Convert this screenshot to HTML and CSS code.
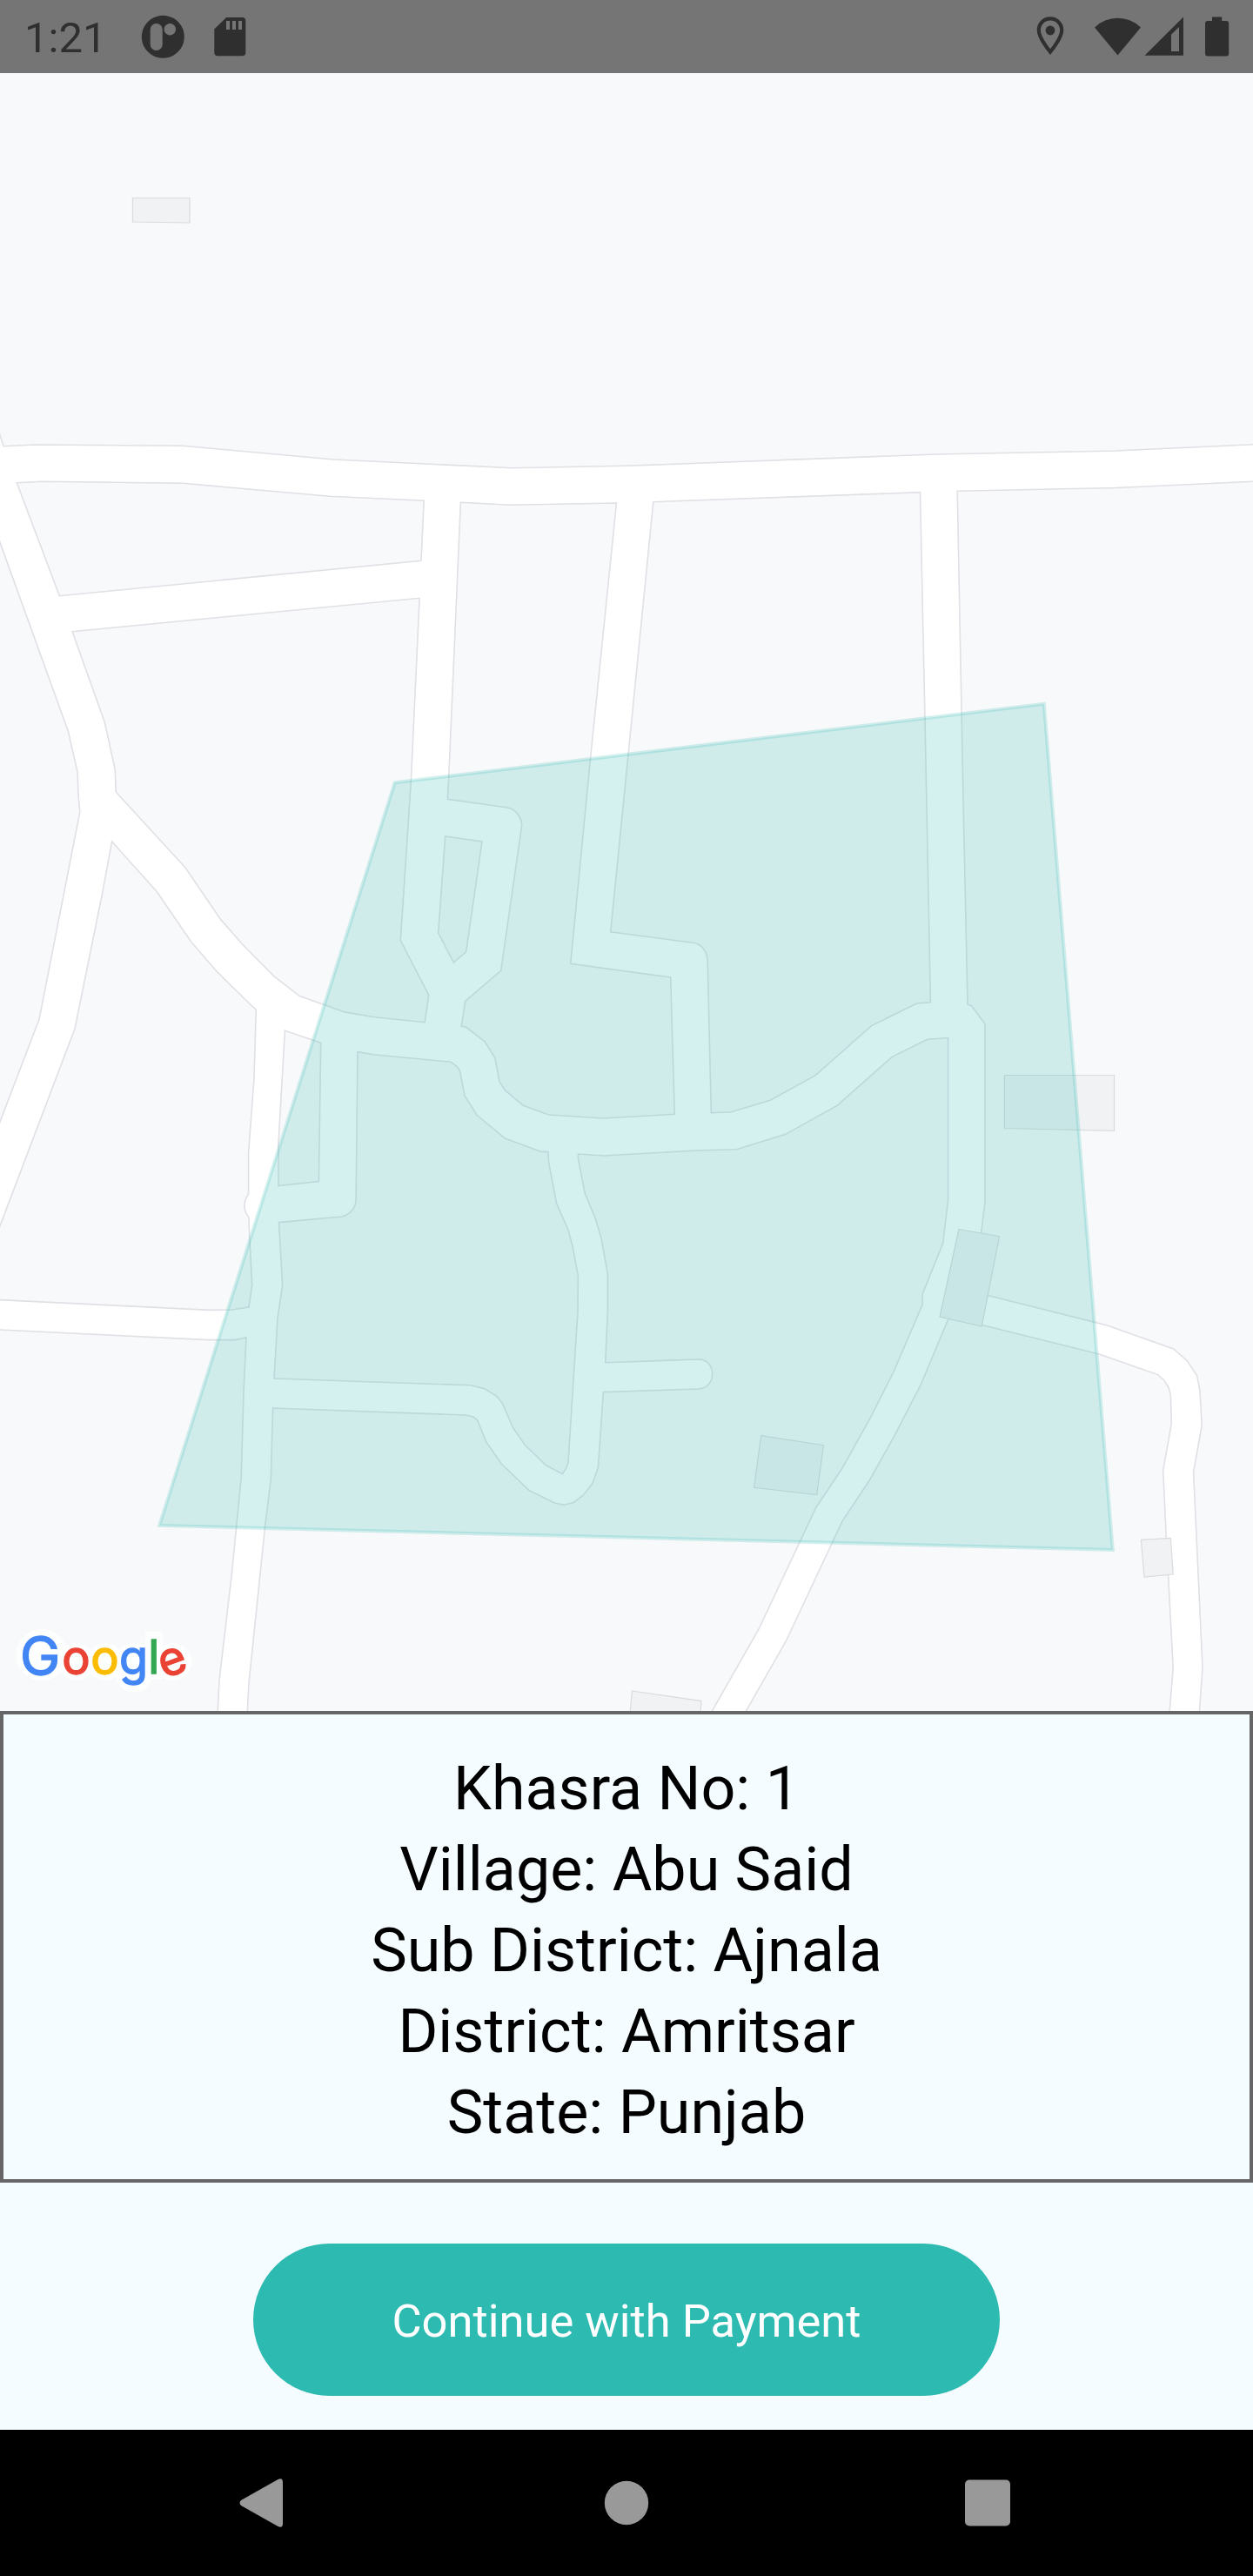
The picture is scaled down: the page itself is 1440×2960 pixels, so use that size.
FILE: index.html
```html
<!DOCTYPE html>
<html lang="en">
<head>
<meta charset="utf-8">
<title>Khasra details</title>
<link rel="stylesheet" href="styles.css">
</head>
<body>
<div class="screen">
  <header class="status-bar">
    <span class="clock">1:21</span>
    <svg class="status-icons" viewBox="140 0 1300 84" aria-hidden="true">
      <path fill-rule="evenodd" d="M187.300 17.800a24.500 24.500 0 1 0 .01 0zM179.700 27a7 7 0 0 1 7 7v17a7 7 0 0 1-14 0V34a7 7 0 0 1 7-7zM195.300 27a6.700 6.700 0 1 1-.01 0z"/>
      <path fill-rule="evenodd" d="M260 20h18.300a4 4 0 0 1 4 4v36.300a4 4 0 0 1-4 4h-28a4 4 0 0 1-4-4V33.500zM260 24v10h4V24zM267 24v10h4V24zM274 24v10h4V24z"/>
      <path class="pin" d="M1207 21.300c-7.400 0-13.200 5.800-13.200 13.400 0 9.300 13.200 25 13.200 25s13.200-15.700 13.200-25c0-7.600-5.800-13.400-13.200-13.400z"/>
      <circle cx="1207" cy="35" r="5.400"/>
      <path d="M1284.500 63.500L1258 31.500a38 38 0 0 1 53 0z"/>
      <path fill-rule="evenodd" d="M1315.500 63.800L1360 19.500v44.300zM1346 39.800V59h9V31z"/>
      <path d="M1393 19.500h11.200V24h5a3 3 0 0 1 3 3v34.500a3 3 0 0 1-3 3h-21.200a3 3 0 0 1-3-3V27a3 3 0 0 1 3-3h5z"/>
    </svg>
  </header>

  <main class="content">
    <svg class="map" viewBox="0 84 1440 1882" role="img" aria-label="Parcel map">
      <!-- Land blocks; the gaps between them are the roads -->
      <g class="land">
        <path d="M-5 80V484L4 512.700 41 511 210 512.300 383.500 528 588 537.700 720 535.300 1076 522 1282 518 1445 510.500V80z"/>
        <path d="M19.300 554.700L48 553.300 210 555.300 379 570.300 487.200 575.300 484 644.300 68.400 684.700z"/>
        <path d="M83.100 725.700L482.100 687.300 472.400 897 460.300 1080.700 492.700 1143.300 488.300 1174.700 430 1168.700 396 1162.900 344.400 1144.600 315 1121.800 279.200 1085.700 253.500 1056.400 213 997 133.200 910 132.200 884 120.300 830z"/>
        <path d="M-5 610L0 623.300 78.500 840.700 89.100 887.300 90 913 91.800 933.200 45 1171.400 -5 1302z"/>
        <path d="M128.600 967L180 1024.300 219.500 1082 249.300 1116.400 289.300 1155.700 294.300 1160 292 1239 285.600 1325V1372Q276 1386 286 1399L286.500 1415 289.700 1476.400 286 1502 266.300 1505 241 1505.400 -5 1493.400V1421L0 1408.600 86 1182 117.500 1027z"/>
        <path d="M327.400 1184.300L368.700 1198.200 366.400 1357.500 320 1362.500V1314z"/>
        <path d="M411 1208.600L429.300 1211.800 518.300 1220.300 525.700 1226 528.700 1231 534 1259 548 1281.300 580.400 1308 620.800 1323 630 1323.600 630.500 1335 639.600 1383 653 1413 658 1432 664.400 1466.400 664 1507.500 653 1680.700 650.200 1688 646.500 1693.600 627.200 1683.600 603 1660 589.600 1640.700 577.600 1613 570.800 1604.300 557 1595.700 541 1591.800 315 1584 319 1514.600 324.600 1477 321.400 1420 320.500 1404.600 392.600 1398C402 1396 409 1388 409.100 1378.600z"/>
        <path d="M-5 1527.700L239 1539.600H269.500L283 1537 280 1598.600 277.300 1697 266.300 1809 252 1930.700 250 1972H-5z"/>
        <path d="M313.600 1618L535 1626 544 1628 548.700 1632 558.800 1657 576.300 1682 608 1712.500 637.300 1727 648.400 1729.300 659.400 1726.400 670.400 1718 681 1704.600 687.400 1686 693.400 1599.600 802.700 1596C824 1595 824 1562 802.700 1562L695.700 1565.700 698.400 1505.700V1463.600L691 1423 684.200 1400 672.300 1371.400 664.400 1331.400V1326L694.300 1328 800.400 1322 846.300 1320.700 902.300 1303.600 962 1270.400 1025.400 1214.300 1065.800 1194.300 1089.600 1192.500V1378.600L1083.700 1428.600 1059.800 1488 1060.300 1498.600 1026.700 1577 1000 1629.600 968 1687 937.700 1732.500 872 1872 815 1972H284L286 1934.300 304.400 1755.700 311.300 1699.300z"/>
        <path d="M511.700 961L554 967 535.700 1093.700 521.300 1106 503.700 1072z"/>
        <path d="M529.400 577.300L585.500 580.300 708.500 578 678.700 870 655.700 1107.300 770.700 1123 775.300 1280.300 693.300 1285 630.700 1281 601.300 1270.300 580.300 1252.700 574 1243 568.700 1215.300 557.300 1197 535.700 1180.300 530.300 1179.300 534.700 1150.300 575.700 1115.300 599.700 948.300C599 938 592 929 581.700 927.700L514.300 918.300 515.700 893z"/>
        <path d="M750.800 576.700L1057.500 565.700 1063 825.700 1069.400 1151.800 1053.800 1153 1001.500 1178.600 937.200 1235.700 885.300 1264.300 839.400 1278 817.300 1278.600 813.200 1105.400C813 1093 806 1084 795.800 1083.200L701.700 1070.700 720.700 880z"/>
        <path d="M1100.200 564.300L1278 560.700 1445 553V1972H1378L1382 1916.400 1371.600 1691.400 1381.200 1638 1379 1598.600 1375.700 1580.700 1364.200 1563.600 1348.600 1550 1272.400 1523 1123 1485.500 1127.700 1416 1131.900 1382V1176.400L1116.700 1156 1112 1154.300 1106.600 900z"/>
        <path d="M1093 1508L1128.700 1522.500 1263.200 1556 1330.700 1579.600 1337.600 1585.700 1343 1594 1345.400 1604 1346.300 1636 1336.700 1689.600 1340.300 1766.400 1348.200 1916.400 1343.700 1972H854L903.200 1886 968 1748 999.200 1701 1028 1649.600 1058.400 1590.700z"/>
      </g>
      <g class="building">
        <path d="M152.500 227.500H218V256L152.500 255z"/>
        <path d="M1154.500 1235.500H1280.500V1299.300L1154.500 1296.500z"/>
        <path d="M1102 1412.500L1148.500 1420.700 1128.200 1524 1080 1513z"/>
        <path d="M874.700 1649.600L946.500 1660.700 938.600 1717.500 866.500 1709.300z"/>
        <path d="M1311.400 1769.300L1345.400 1767.500 1348.200 1809 1315 1812z"/>
        <path d="M726.400 1943L806 1954.600 804.500 1972H723.700z"/>
      </g>
      <path class="parcel" d="M453.700 899.300L1199.800 808.700 1278.800 1781 183.200 1752.900z"/>
      <g class="logo-halo">
        <circle cx="48" cy="1901.500" r="29.500"/>
        <circle cx="88" cy="1909.500" r="21.500"/>
        <circle cx="121" cy="1909.500" r="21.500"/>
        <circle cx="154" cy="1909.500" r="21.500"/>
        <circle cx="154" cy="1923.500" r="21"/>
        <rect x="167" y="1875" width="20" height="55"/>
        <circle cx="199" cy="1909.500" r="21.500"/>
      </g>
      <text class="logo" x="23 71.200 104.300 137 170.200 188.500" y="1924.500 1924 1924 1924 1923 1929" rotate="0 0 0 0 0 -20"><tspan class="logo-cap blue">G</tspan><tspan class="red">o</tspan><tspan class="yellow">o</tspan><tspan class="blue">g</tspan><tspan class="green">l</tspan><tspan class="red">e</tspan></text>
    </svg>

    <section class="details">
      <p>Khasra No: 1</p>
      <p>Village: Abu Said</p>
      <p>Sub District: Ajnala</p>
      <p>District: Amritsar</p>
      <p>State: Punjab</p>
    </section>

    <div class="actions">
      <button class="pay" type="button">Continue with Payment</button>
    </div>
  </main>

  <nav class="nav-bar">
    <svg class="nav-icons" viewBox="0 0 1440 168" aria-hidden="true">
      <path d="M277 81L319 57.300Q325 54 325 60.500V107.500Q325 114 319 110.700L277 87Q274 84 277 81z"/>
      <circle cx="720" cy="84" r="25.200"/>
      <rect x="1109" y="57.500" width="52" height="53" rx="5"/>
    </svg>
  </nav>
</div>
</body>
</html>
```
FILE: styles.css
```css
* {
  box-sizing: border-box;
}

body {
  margin: 0;
  font-family: Roboto, "Liberation Sans", sans-serif;
  background: #f5fcff;
}

.screen {
  display: flex;
  flex-direction: column;
  width: 1440px;
  height: 2960px;
}

.status-bar {
  display: flex;
  align-items: center;
  height: 84px;
  background: #757575;
  color: #2f2f2f;
}

.clock {
  width: 140px;
  padding: 3px 0 0 28px;
  font-size: 49px;
  line-height: 58px;
}

.status-icons {
  display: block;
  width: 1300px;
  height: 84px;
  fill: #2f2f2f;
}

.pin {
  fill: none;
  stroke: #2f2f2f;
  stroke-width: 4.2;
}

.content {
  display: flex;
  flex: 1;
  flex-direction: column;
  background: #f5fcff;
}

.map {
  display: block;
  width: 1440px;
  height: 1882px;
  background: #fff;
}

.land path {
  fill: #f8f9fb;
  stroke: #e0e0e5;
  stroke-width: 1.6;
}

.building path {
  fill: #f1f2f4;
  stroke: #dadbde;
  stroke-width: 1.2;
}

.parcel {
  fill: rgba(44, 186, 177, 0.2);
  stroke: rgba(44, 186, 177, 0.2);
  stroke-width: 4;
}

.logo-halo {
  fill: #fdfffe;
}

.logo {
  font-family: Inter, sans-serif;
  font-size: 54px;
  font-weight: 400;
  stroke-width: 1.4;
}

.logo-cap {
  font-size: 62px;
}

.blue { fill: #4285f4; stroke: #4285f4; }
.red { fill: #ea4335; stroke: #ea4335; }
.yellow { fill: #fbbc05; stroke: #fbbc05; }
.green { fill: #34a853; stroke: #34a853; }

.details {
  height: 542px;
  padding-top: 39px;
  border: 4px solid #666;
  color: #000;
  font-size: 70px;
  line-height: 93px;
  text-align: center;
}

.details p {
  margin: 0;
}

.actions {
  display: flex;
  justify-content: center;
  padding-top: 70px;
}

.pay {
  width: 858px;
  height: 175px;
  padding: 3px 0 0;
  border: 0;
  border-radius: 88px;
  background: #2cbab1;
  color: #fff;
  font-family: inherit;
  font-size: 52.500px;
}

.nav-bar {
  height: 168px;
  background: #000;
}

.nav-icons {
  display: block;
  width: 1440px;
  height: 168px;
  fill: #999;
}
```
